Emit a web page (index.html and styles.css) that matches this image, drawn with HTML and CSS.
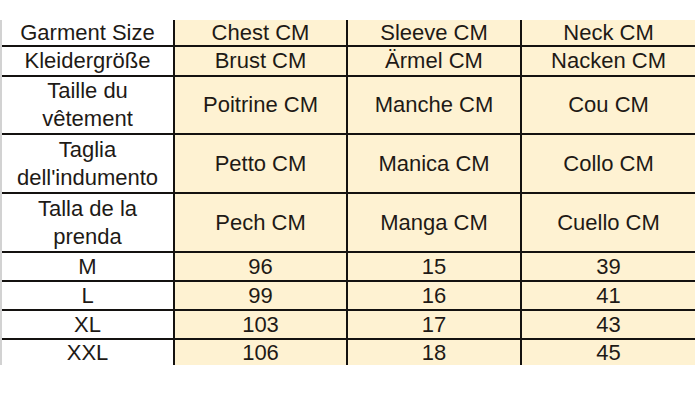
FILE: index.html
```html
<!DOCTYPE html>
<html>
<head>
<meta charset="utf-8">
<link rel="stylesheet" href="styles.css">
</head>
<body>
<div class="sheet">
  <div class="cell label">Garment Size</div>
  <div class="cell">Chest CM</div>
  <div class="cell">Sleeve CM</div>
  <div class="cell">Neck CM</div>

  <div class="cell label">Kleidergröße</div>
  <div class="cell">Brust CM</div>
  <div class="cell">Ärmel CM</div>
  <div class="cell">Nacken CM</div>

  <div class="cell label">Taille du<br>vêtement</div>
  <div class="cell">Poitrine CM</div>
  <div class="cell">Manche CM</div>
  <div class="cell">Cou CM</div>

  <div class="cell label">Taglia<br>dell'indumento</div>
  <div class="cell">Petto CM</div>
  <div class="cell">Manica CM</div>
  <div class="cell">Collo CM</div>

  <div class="cell label">Talla de la<br>prenda</div>
  <div class="cell">Pech CM</div>
  <div class="cell">Manga CM</div>
  <div class="cell">Cuello CM</div>

  <div class="cell label">M</div>
  <div class="cell">96</div>
  <div class="cell">15</div>
  <div class="cell">39</div>

  <div class="cell label">L</div>
  <div class="cell">99</div>
  <div class="cell">16</div>
  <div class="cell">41</div>

  <div class="cell label">XL</div>
  <div class="cell">103</div>
  <div class="cell">17</div>
  <div class="cell">43</div>

  <div class="cell label">XXL</div>
  <div class="cell">106</div>
  <div class="cell">18</div>
  <div class="cell">45</div>
</div>
</body>
</html>
```

FILE: styles.css
```css
html, body {
  margin: 0;
  padding: 0;
  background: #ffffff;
}

body {
  font-family: "Liberation Sans", Arial, sans-serif;
  font-size: 22px;
  color: #1e1a16;
  padding-top: 20px;
}

.sheet {
  display: grid;
  grid-template-columns: 171px 171px 172px 173px;
  grid-template-rows: 25px 28px 56px 57px 57px 27px 27px 27px 25px;
  column-gap: 2px;
  row-gap: 2px;
  width: 691px;
  background: #141210;
  border-left: 2px solid #d2d2d2;
  padding-right: 2px;
}

.cell {
  display: flex;
  align-items: center;
  justify-content: center;
  text-align: center;
  line-height: 28px;
  background: #fef2d2;
  white-space: nowrap;
  overflow: hidden;
}

.label {
  background: #ffffff;
}
```
